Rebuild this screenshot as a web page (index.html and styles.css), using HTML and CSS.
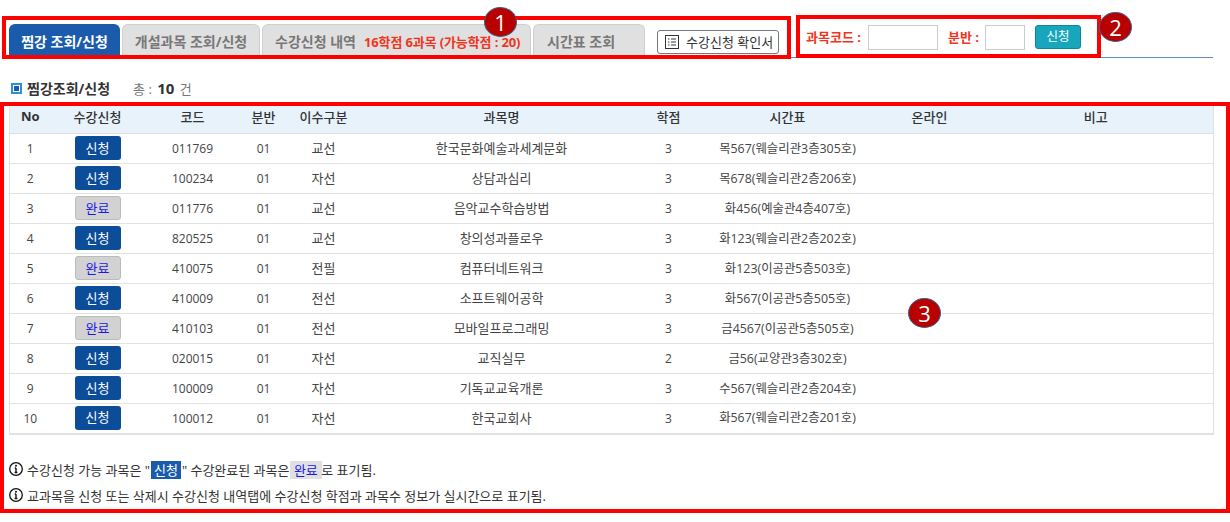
FILE: index.html
```html
<!DOCTYPE html>
<html lang="ko">
<head>
<meta charset="utf-8">
<title>찜강 조회/신청</title>
<link rel="stylesheet" href="styles.css">
</head>
<body>
<div class="page">
  <header class="topbar">
    <nav class="tabs">
      <a class="tab tab-active tab-first">찜강 조회/신청</a>
      <a class="tab tab-second">개설과목 조회/신청</a>
      <a class="tab tab-third">수강신청 내역<span class="tab-credit">16학점 6과목 (가능학점 : 20)</span></a>
      <a class="tab tab-fourth">시간표 조회</a>
    </nav>
    <button class="confirm-btn">
      <svg class="list-icon" width="14" height="14" viewBox="0 0 14 14" fill="none" stroke="#333" stroke-width="1"><rect x="0.5" y="0.5" width="13" height="13"/><path d="M3 4h1.5M3 7h1.5M3 10h1.5M6 4h5M6 7h5M6 10h5"/></svg>
      <span>수강신청 확인서</span>
    </button>
    <form class="quick-form">
      <label class="quick-label quick-label-code">과목코드 :</label>
      <input class="quick-input quick-input-code">
      <label class="quick-label quick-label-class">분반 :</label>
      <input class="quick-input quick-input-class">
      <button type="button" class="quick-btn">신청</button>
    </form>
  </header>

  <div class="summary">
    <span class="summary-mark"></span>
    <h2 class="summary-title">찜강조회/신청</h2>
    <span class="summary-total">총 : <b>10</b> 건</span>
  </div>

  <table class="grid">
    <colgroup>
      <col class="c-no"><col class="c-apply"><col class="c-code"><col class="c-class"><col class="c-type"><col class="c-name"><col class="c-credit"><col class="c-time"><col class="c-online"><col class="c-note">
    </colgroup>
    <thead>
      <tr><th class="th-no">No</th><th>수강신청</th><th>코드</th><th>분반</th><th>이수구분</th><th>과목명</th><th>학점</th><th>시간표</th><th>온라인</th><th>비고</th></tr>
    </thead>
    <tbody>
      <tr><td>1</td><td class="cell-pill"><span class="pill pill-apply">신청</span></td><td>011769</td><td>01</td><td class="ko">교선</td><td class="ko">한국문화예술과세계문화</td><td>3</td><td class="time">목567(웨슬리관3층305호)</td><td></td><td></td></tr>
      <tr><td>2</td><td class="cell-pill"><span class="pill pill-apply">신청</span></td><td>100234</td><td>01</td><td class="ko">자선</td><td class="ko">상담과심리</td><td>3</td><td class="time">목678(웨슬리관2층206호)</td><td></td><td></td></tr>
      <tr><td>3</td><td class="cell-pill"><span class="pill pill-done">완료</span></td><td>011776</td><td>01</td><td class="ko">교선</td><td class="ko">음악교수학습방법</td><td>3</td><td class="time">화456(예술관4층407호)</td><td></td><td></td></tr>
      <tr><td>4</td><td class="cell-pill"><span class="pill pill-apply">신청</span></td><td>820525</td><td>01</td><td class="ko">교선</td><td class="ko">창의성과플로우</td><td>3</td><td class="time">화123(웨슬리관2층202호)</td><td></td><td></td></tr>
      <tr><td>5</td><td class="cell-pill"><span class="pill pill-done">완료</span></td><td>410075</td><td>01</td><td class="ko">전필</td><td class="ko">컴퓨터네트워크</td><td>3</td><td class="time">화123(이공관5층503호)</td><td></td><td></td></tr>
      <tr><td>6</td><td class="cell-pill"><span class="pill pill-apply">신청</span></td><td>410009</td><td>01</td><td class="ko">전선</td><td class="ko">소프트웨어공학</td><td>3</td><td class="time">화567(이공관5층505호)</td><td></td><td></td></tr>
      <tr><td>7</td><td class="cell-pill"><span class="pill pill-done">완료</span></td><td>410103</td><td>01</td><td class="ko">전선</td><td class="ko">모바일프로그래밍</td><td>3</td><td class="time">금4567(이공관5층505호)</td><td></td><td></td></tr>
      <tr><td>8</td><td class="cell-pill"><span class="pill pill-apply">신청</span></td><td>020015</td><td>01</td><td class="ko">자선</td><td class="ko">교직실무</td><td>2</td><td class="time">금56(교양관3층302호)</td><td></td><td></td></tr>
      <tr><td>9</td><td class="cell-pill"><span class="pill pill-apply">신청</span></td><td>100009</td><td>01</td><td class="ko">자선</td><td class="ko">기독교교육개론</td><td>3</td><td class="time">수567(웨슬리관2층204호)</td><td></td><td></td></tr>
      <tr><td>10</td><td class="cell-pill"><span class="pill pill-apply">신청</span></td><td>100012</td><td>01</td><td class="ko">자선</td><td class="ko">한국교회사</td><td>3</td><td class="time">화567(웨슬리관2층201호)</td><td></td><td></td></tr>
    </tbody>
  </table>

  <div class="notes">
    <p class="note">
      <svg class="info-icon" width="14" height="14" viewBox="0 0 14 14" fill="none" stroke="#111"><circle cx="7" cy="7" r="6.3" stroke-width="1.3"/><path d="M7 6v4.5M5.6 10.5h2.8M5.8 6h1.2" stroke-width="1.4"/><circle cx="7" cy="3.8" r="1" fill="#111" stroke="none"/></svg>
      <span>수강신청 가능 과목은 "<span class="tag-apply">신청</span>" 수강완료된 과목은 <span class="tag-done">완료</span> 로 표기됨.</span>
    </p>
    <p class="note">
      <svg class="info-icon" width="14" height="14" viewBox="0 0 14 14" fill="none" stroke="#111"><circle cx="7" cy="7" r="6.3" stroke-width="1.3"/><path d="M7 6v4.5M5.6 10.5h2.8M5.8 6h1.2" stroke-width="1.4"/><circle cx="7" cy="3.8" r="1" fill="#111" stroke="none"/></svg>
      <span>교과목을 신청 또는 삭제시 수강신청 내역탭에 수강신청 학점과 과목수 정보가 실시간으로 표기됨.</span>
    </p>
  </div>

  <div class="frame frame-1"></div>
  <div class="frame frame-2"></div>
  <div class="frame frame-3"></div>
  <span class="badge badge-1">1</span>
  <span class="badge badge-2">2</span>
  <span class="badge badge-3">3</span>
</div>
</body>
</html>
```

FILE: styles.css
```css
* { box-sizing: border-box; }
html, body { margin: 0; padding: 0; background: #fff; }
body {
  font-family: "Open Sans", "Noto Sans CJK KR", sans-serif;
  font-size: 12px;
  color: #444;
}
.page { position: relative; width: 1230px; height: 522px; overflow: hidden; padding: 24px 0 0 9px; }

.topbar {
  display: flex;
  align-items: flex-start;
  width: 1204px;
  height: 34px;
  border-bottom: 1px solid #5b8fc4;
}
.tabs { display: flex; gap: 2px; height: 31px; }
.tab {
  display: flex;
  align-items: center;
  height: 31px;
  padding-top: 2px;
  border: 1px solid #cfcfcf;
  border-bottom: none;
  border-radius: 6px 6px 0 0;
  background: #e0e0e0;
  color: #777;
  font-weight: 700;
  font-size: 14px;
}
.tab-first { width: 111px; justify-content: center; }
.tab-second { width: 138px; justify-content: center; }
.tab-third { width: 269px; padding-left: 12px; }
.tab-fourth { width: 112px; padding-left: 13px; }
.tab-active { background: #1a5cab; border-color: #1a5cab; color: #fff; }
.tab-credit { margin-left: 8px; color: #f0341e; font-size: 13px; letter-spacing: -0.12px; }

.confirm-btn {
  display: flex;
  align-items: center;
  gap: 7px;
  width: 122px;
  height: 24px;
  margin: 6px 0 0 12px;
  padding: 0 0 0 7px;
  border: 1px solid #777;
  border-radius: 3px;
  background: #fff;
  color: #333;
  font: inherit;
  font-size: 13px;
}
.confirm-btn span { padding-bottom: 2px; }
.list-icon { flex: none; }

.quick-form { display: flex; align-items: center; height: 26px; margin: 0 0 0 27px; }
.quick-label { padding-bottom: 2px; color: #f0341e; font-weight: 700; font-size: 13px; }
.quick-input { height: 25px; padding: 0; border: 1px solid #ccc; background: #fff; }
.quick-input-code { width: 70px; margin-left: 7px; }
.quick-label-class { margin-left: 10px; }
.quick-input-class { width: 40px; margin-left: 6px; }
.quick-btn {
  width: 46px;
  height: 24px;
  margin-left: 10px;
  padding: 0 0 3px;
  border: 1px solid #11849a;
  border-radius: 3px;
  background: #17a6bc;
  color: #fff;
  font: inherit;
  font-size: 12.5px;
}

.summary { display: flex; align-items: center; height: 22px; margin: 19px 0 0 2px; }
.summary-mark {
  width: 11px;
  height: 11px;
  border: 2px solid #2f8fd8;
  background: #1a5cab;
  box-shadow: inset 0 0 0 1px #fff;
}
.summary-title { margin: 0 0 0 5px; color: #333; font-size: 14px; font-weight: 700; }
.summary-total { margin-left: 23px; color: #777; font-size: 13px; }
.summary-total b { color: #333; font-size: 15px; margin: 0 2px; }

.grid {
  table-layout: fixed;
  width: 1204px;
  margin: 5px 0 0 0;
  border-collapse: collapse;
  border: 1px solid #e2e2e2;
  border-bottom-width: 2px;
}
.c-no { width: 41px; }
.c-apply { width: 94px; }
.c-code { width: 96px; }
.c-class { width: 46px; }
.c-type { width: 74px; }
.c-name { width: 282px; }
.c-credit { width: 52px; }
.c-time { width: 186px; }
.c-online { width: 98px; }
.c-note { width: 235px; }
.grid th {
  height: 29px;
  padding: 0 0 6px;
  background: #e8f2fb;
  border-bottom: 1px solid #dfdfdf;
  color: #333;
  font-weight: 500;
  text-align: center;
  font-size: 13px;
}
.grid th.th-no { font-weight: 700; }
.grid td {
  height: 30px;
  padding: 0;
  border-bottom: 1px solid #e2e2e2;
  text-align: center;
  font-size: 12px;
  color: #444;
}
.grid td.ko { font-size: 13px; padding-bottom: 2px; }
.grid td.time { font-size: 12.4px; padding-bottom: 2px; }
.grid td.cell-pill { padding-bottom: 1px; }
.pill {
  display: inline-flex;
  align-items: center;
  justify-content: center;
  width: 46px;
  height: 24px;
  padding-bottom: 2px;
  border-radius: 3px;
  vertical-align: middle;
  font-size: 13px;
}
.pill-apply { background: #0c4d9a; color: #fff; }
.pill-done { background: #d2d2d2; border: 1px solid #bbb; color: #1a1ae6; }

.notes { margin: 26px 0 0 0; }
.note { display: flex; align-items: center; margin: 0 0 9px; height: 17px; color: #333; font-size: 13px; }
.info-icon { flex: none; margin-right: 4px; }
.tag-apply { background: #1a5cab; color: #fff; padding: 0 3px; margin: 0 1px; }
.tag-done { background: #e0e0e0; color: #1a1ae6; padding: 0 4px; margin: 0 -4px 0 -3px; }

.frame { position: absolute; border: 4px solid #f00; pointer-events: none; }
.frame-1 { left: 2px; top: 16px; width: 789px; height: 43px; }
.frame-2 { left: 796px; top: 15px; width: 305px; height: 43px; }
.frame-3 { left: 0; top: 102px; width: 1230px; height: 411px; }

.badge {
  position: absolute;
  display: flex;
  align-items: center;
  justify-content: center;
  width: 33px;
  height: 30px;
  border-radius: 50%;
  background: #b80000;
  border: 1px solid #3c5f8c;
  color: #fff;
  font-family: "Open Sans", sans-serif;
  font-size: 22px;
  line-height: 1;
}
.badge-1 { left: 484px; top: 7px; }
.badge-2 { left: 1099px; top: 12px; }
.badge-3 { left: 908px; top: 298px; }
```
